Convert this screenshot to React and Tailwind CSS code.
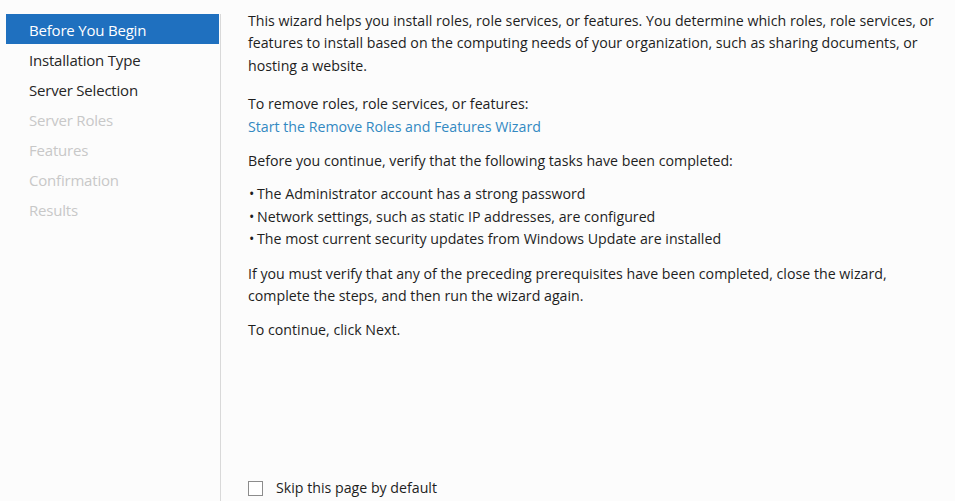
import React from 'react'

const steps = [
  { label: 'Before You Begin', state: 'active' },
  { label: 'Installation Type', state: 'enabled' },
  { label: 'Server Selection', state: 'enabled' },
  { label: 'Server Roles', state: 'disabled' },
  { label: 'Features', state: 'disabled' },
  { label: 'Confirmation', state: 'disabled' },
  { label: 'Results', state: 'disabled' },
]

const bullets = [
  'The Administrator account has a strong password',
  'Network settings, such as static IP addresses, are configured',
  'The most current security updates from Windows Update are installed',
]

export default function App() {
  return (
    <div
      className="flex h-screen w-full bg-[#fcfcfc] text-[#1e1e1e]"
      style={{ fontFamily: '"Open Sans", "Noto Sans", sans-serif' }}
    >
      {/* Step list */}
      <div className="w-[221px] flex-shrink-0 pt-[14px] pl-[6px] flex">
        <div className="flex-1 border-r border-[#d9d9d9]">
          {steps.map((s) => (
            <div
              key={s.label}
              className={
                'h-[30px] mr-[1px] pl-[23px] pt-[2px] flex items-center text-[15px] tracking-[-0.2px] ' +
                (s.state === 'active'
                  ? 'bg-[#1f70bf] text-white'
                  : s.state === 'enabled'
                  ? 'text-[#262626]'
                  : 'text-[#c8c8c8]')
              }
            >
              {s.label}
            </div>
          ))}
        </div>
      </div>

      {/* Content */}
      <div className="flex-1 flex flex-col pl-[27px] pr-[10px] pt-[10px] text-[14.2px] leading-[22.4px] whitespace-nowrap">
        <p>
          This wizard helps you install roles, role services, or features. You determine which roles, role services, or
          <br />
          features to install based on the computing needs of your organization, such as sharing documents, or
          <br />
          hosting a website.
        </p>

        <p className="mt-[16px]">To remove roles, role services, or features:</p>
        <a href="#" className="text-[#3389c2] self-start">Start the Remove Roles and Features Wizard</a>

        <p className="mt-[12px]">Before you continue, verify that the following tasks have been completed:</p>

        <ul className="mt-[11px]">
          {bullets.map((b) => (
            <li key={b} className="flex">
              <span className="w-[9px] pl-[1px]">•</span>
              <span>{b}</span>
            </li>
          ))}
        </ul>

        <p className="mt-[12px]">
          If you must verify that any of the preceding prerequisites have been completed, close the wizard,
          <br />
          complete the steps, and then run the wizard again.
        </p>

        <p className="mt-[12px]">To continue, click Next.</p>

        <label className="mt-auto mb-[2px] flex items-center h-[22px]">
          <span className="w-[15px] h-[15px] border border-[#8c8c8c] bg-white mr-[13px]"></span>
          <span>Skip this page by default</span>
        </label>
      </div>
    </div>
  )
}
